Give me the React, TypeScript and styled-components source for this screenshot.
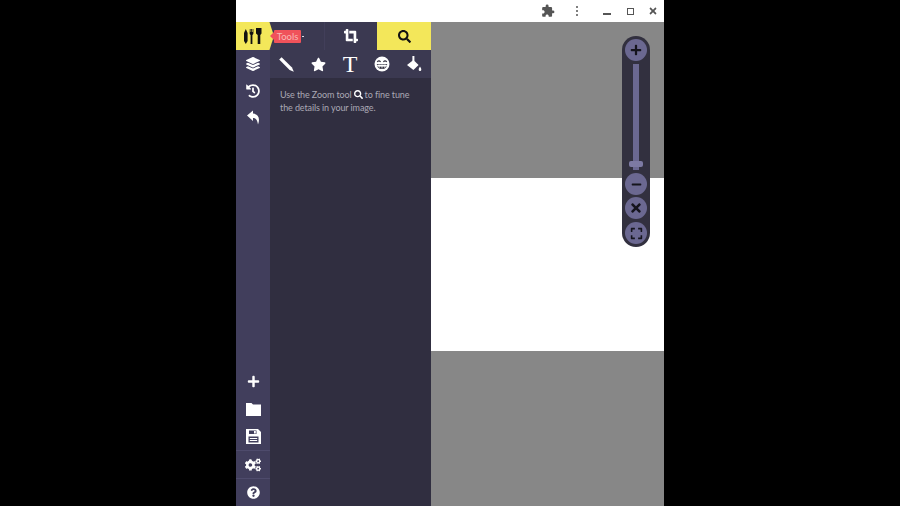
import React from "react";
import styled, { createGlobalStyle } from "styled-components";
import {
  FaCogs,
  FaCropAlt,
  FaExpand,
  FaLayerGroup,
  FaMinus,
  FaPlus,
  FaQuestionCircle,
  FaHistory,
  FaSearch,
  FaStar,
  FaTimes,
} from "react-icons/fa";
import { MdExtension } from "react-icons/md";

const GlobalStyle = createGlobalStyle`
  html, body { margin: 0; padding: 0; background: #000; }
  body { font-family: Lato, "Liberation Sans", sans-serif; }
`;

const Screen = styled.div`
  width: 900px;
  height: 506px;
  background: #000;
  display: flex;
  justify-content: center;
  overflow: hidden;
`;

const Window = styled.div`
  width: 428px;
  height: 506px;
  display: flex;
  flex-direction: column;
  background: #fff;
`;

const TitleBar = styled.div`
  height: 22px;
  flex: none;
  background: #fff;
  display: flex;
  align-items: center;
  justify-content: flex-end;
  color: #555;
`;

const TitleIcon = styled.div<{ $w: number }>`
  width: ${(p) => p.$w}px;
  display: flex;
  justify-content: center;
  align-items: center;
`;

const Dots = styled.span`
  width: 2px;
  height: 2px;
  border-radius: 50%;
  background: #555;
  box-shadow: 0 -4px 0 #555, 0 4px 0 #555;
`;

const MinBar = styled.span`
  width: 8px;
  height: 2px;
  margin-top: 6px;
  background: #555;
`;

const MaxBox = styled.span`
  width: 5px;
  height: 5px;
  border: 1.5px solid #555;
`;

const Body = styled.div`
  flex: 1;
  display: flex;
  min-height: 0;
`;

const Sidebar = styled.div`
  width: 34px;
  flex: none;
  background: #413e5c;
  display: flex;
  flex-direction: column;
`;

const LogoTab = styled.div`
  width: 38px;
  height: 28px;
  flex: none;
  background: #f3e75a;
  clip-path: polygon(0 0, 88% 0, 100% 50%, 88% 100%, 0 100%);
  display: flex;
  align-items: center;
  padding-left: 7px;
  box-sizing: border-box;
  position: relative;
  z-index: 2;
`;

const SideButton = styled.div<{ $h: number; $line?: boolean }>`
  height: ${(p) => p.$h}px;
  flex: none;
  display: flex;
  align-items: center;
  justify-content: center;
  color: #fff;
  border-top: ${(p) => (p.$line ? "1px solid #4e4b6c" : "none")};
  box-sizing: border-box;
`;

const Spacer = styled.div`
  flex: 1;
`;

const Panel = styled.div`
  width: 161px;
  flex: none;
  background: #302e40;
  display: flex;
  flex-direction: column;
  position: relative;
`;

const TopTabs = styled.div`
  height: 28px;
  flex: none;
  background: #3b3951;
  display: grid;
  grid-template-columns: 54px 53px 54px;
`;

const TopTab = styled.div<{ $active?: boolean }>`
  display: flex;
  align-items: center;
  justify-content: center;
  background: ${(p) => (p.$active ? "#f3e75a" : "transparent")};
  color: ${(p) => (p.$active ? "#111" : "#fff")};
  border-left: ${(p) => (p.$active ? "none" : "1px solid #423f5a")};
`;

const ToolRow = styled.div`
  height: 28px;
  flex: none;
  background: #3b3951;
  display: grid;
  grid-template-columns: repeat(5, 32px);
`;

const Tool = styled.div`
  display: flex;
  align-items: center;
  justify-content: center;
  color: #fff;
`;

const TextGlyph = styled.span`
  font-family: "Liberation Serif", serif;
  font-size: 24px;
  line-height: 1;
  color: #fff;
`;

const Hint = styled.div`
  padding: 10px 4px 0 10px;
  font-size: 9px;
  line-height: 13px;
  letter-spacing: -0.1px;
  color: #aaa8b4;
`;

const HintLine = styled.div`
  display: flex;
  align-items: center;
  white-space: nowrap;

  svg {
    color: #fff;
    margin: 0 2px;
  }
`;

const Tooltip = styled.div`
  position: absolute;
  left: 4px;
  top: 8px;
  width: 27px;
  height: 13px;
  background: #f0525a;
  color: #f8b9b6;
  font-size: 9.5px;
  line-height: 13px;
  text-align: center;
  border-radius: 1px;
  z-index: 3;

  &::before {
    content: "";
    position: absolute;
    left: -4px;
    top: 2px;
    border-style: solid;
    border-width: 4.5px 4px 4.5px 0;
    border-color: transparent #f0525a transparent transparent;
  }

  &::after {
    content: "";
    position: absolute;
    right: -3px;
    top: 6px;
    width: 2px;
    height: 1px;
    background: #dcdbe4;
  }
`;

const Canvas = styled.div`
  flex: 1;
  display: flex;
  flex-direction: column;
  position: relative;
`;

const Gray = styled.div<{ $h?: number }>`
  background: #878787;
  ${(p) => (p.$h ? `height: ${p.$h}px; flex: none;` : "flex: 1;")}
`;

const ImageArea = styled.div`
  height: 173px;
  flex: none;
  background: #fff;
`;

const ZoomControl = styled.div`
  position: absolute;
  left: 191px;
  top: 14px;
  width: 28px;
  height: 211px;
  background: #32303f;
  border-radius: 14px;
  box-sizing: border-box;
  padding: 3px;
  display: flex;
  flex-direction: column;
  align-items: center;
`;

const ZoomButton = styled.div<{ $mt?: number }>`
  width: 22px;
  height: 22px;
  flex: none;
  border-radius: 50%;
  background: #6b6891;
  margin-top: ${(p) => p.$mt ?? 0}px;
  color: #15141d;
  display: flex;
  align-items: center;
  justify-content: center;
`;

const Track = styled.div`
  width: 6px;
  height: 106px;
  margin-top: 3px;
  background: #6b6891;
  position: relative;
  flex: none;
`;

const Thumb = styled.div`
  position: absolute;
  left: -4px;
  bottom: 3px;
  width: 14px;
  height: 6px;
  border-radius: 2px;
  background: #7d7aa3;
`;

const ToolsLogo = () => (
  <svg width="19" height="16" viewBox="0 0 19 16" fill="#111">
    <path d="M1 5 L2.8 1 L4.6 5 V13 L2.8 16 L1 13 Z" />
    <path d="M6.8 1 h.8 v3 h.6 V1 h.8 v3 h.6 V1 h.8 v4.5 q0 1 -1 1.4 V16 h-1.8 V6.9 q-1 -.4 -1 -1.4 Z" />
    <path d="M13 0 h5.5 v5.5 l-1.2 1.5 V16 h-2.6 V7 L13 5.5 Z" />
  </svg>
);

const PencilIcon = () => (
  <svg width="15" height="15" viewBox="0 0 15 15" fill="#fff">
    <path d="M0.2 2.6 L2.6 0.2 L13 10.6 L14.8 14.8 L10.6 13 Z" />
  </svg>
);

const GrinIcon = () => (
  <svg width="16" height="16" viewBox="0 0 16 16">
    <circle cx="8" cy="8" r="7.5" fill="#fff" />
    <path d="M3.2 6 Q5 3.8 6.6 6 M9.4 6 Q11 3.8 12.8 6" fill="none" stroke="#32303f" strokeWidth="1.1" />
    <path d="M2.8 8 H13.2 Q13 13 8 13 Q3 13 2.8 8 Z" fill="#32303f" />
    <path d="M3.6 9 H12.4 V10.2 H3.6 Z M5.2 8.6 V12 M8 8.6 V12.6 M10.8 8.6 V12" fill="#fff" stroke="#fff" strokeWidth="0.7" />
  </svg>
);

const BucketIcon = () => (
  <svg width="16" height="16" viewBox="0 0 16 16" fill="#fff">
    <path d="M6.4 0 h2 v5 h-2 z" />
    <path d="M7.4 4 L12.6 9 L7.4 14 L1 9 Z" />
    <path d="M14 10.5 Q15.6 12.8 15.3 13.8 a1.3 1.3 0 0 1 -2.6 0 Q12.4 12.8 14 10.5 Z" />
  </svg>
);

const UndoIcon = () => (
  <svg width="14" height="15" viewBox="0 0 14 15" fill="#fff">
    <path d="M1 5.5 L7 0.5 V3.6 C12 3.6 14.5 8 12 14.5 C11.4 10.5 10 8 7 8 V11 Z" />
  </svg>
);

const FolderIcon = () => (
  <svg width="15" height="14" viewBox="0 0 15 14" fill="#fff">
    <path d="M0 1 h5.5 l1.5 1.5 H15 V14 H0 Z" />
  </svg>
);

const SaveIcon = () => (
  <svg width="15" height="15" viewBox="0 0 15 15">
    <path d="M0 0 H12 L15 3 V15 H0 Z" fill="#fff" />
    <path d="M3 1.5 H10.5 V5 H3 Z M2.5 7.5 H12.5 V13.5 H2.5 Z" fill="#413e5c" />
    <path d="M8 2 H9.8 V4.5 H8 Z M3.8 9 H11.2 V10 H3.8 Z M3.8 11 H11.2 V12 H3.8 Z" fill="#fff" />
  </svg>
);

export default function App() {
  return (
    <Screen>
      <GlobalStyle />
      <Window>
        <TitleBar>
          <TitleIcon $w={18}>
            <MdExtension size={14} />
          </TitleIcon>
          <TitleIcon $w={39}>
            <Dots />
          </TitleIcon>
          <TitleIcon $w={22}>
            <MinBar />
          </TitleIcon>
          <TitleIcon $w={24}>
            <MaxBox />
          </TitleIcon>
          <TitleIcon $w={22}>
            <FaTimes size={10} />
          </TitleIcon>
        </TitleBar>
        <Body>
          <Sidebar>
            <LogoTab>
              <ToolsLogo />
            </LogoTab>
            <SideButton $h={27}>
              <FaLayerGroup size={14} />
            </SideButton>
            <SideButton $h={27}>
              <FaHistory size={14} />
            </SideButton>
            <SideButton $h={27}>
              <UndoIcon />
            </SideButton>
            <Spacer />
            <SideButton $h={28}>
              <FaPlus size={13} />
            </SideButton>
            <SideButton $h={27}>
              <FolderIcon />
            </SideButton>
            <SideButton $h={28}>
              <SaveIcon />
            </SideButton>
            <SideButton $h={28} $line>
              <FaCogs size={16} />
            </SideButton>
            <SideButton $h={28} $line>
              <FaQuestionCircle size={13} />
            </SideButton>
          </Sidebar>
          <Panel>
            <Tooltip>Tools</Tooltip>
            <TopTabs>
              <TopTab />
              <TopTab>
                <FaCropAlt size={14} />
              </TopTab>
              <TopTab $active>
                <FaSearch size={13} />
              </TopTab>
            </TopTabs>
            <ToolRow>
              <Tool>
                <PencilIcon />
              </Tool>
              <Tool>
                <FaStar size={15} />
              </Tool>
              <Tool>
                <TextGlyph>T</TextGlyph>
              </Tool>
              <Tool>
                <GrinIcon />
              </Tool>
              <Tool>
                <BucketIcon />
              </Tool>
            </ToolRow>
            <Hint>
              <HintLine>
                Use the Zoom tool
                <FaSearch size={9} />
                to fine tune
              </HintLine>
              <HintLine>the details in your image.</HintLine>
            </Hint>
          </Panel>
          <Canvas>
            <Gray $h={156} />
            <ImageArea />
            <Gray />
            <ZoomControl>
              <ZoomButton>
                <FaPlus size={12} />
              </ZoomButton>
              <Track>
                <Thumb />
              </Track>
              <ZoomButton $mt={3}>
                <FaMinus size={11} />
              </ZoomButton>
              <ZoomButton $mt={2}>
                <FaTimes size={14} />
              </ZoomButton>
              <ZoomButton $mt={3}>
                <FaExpand size={13} />
              </ZoomButton>
            </ZoomControl>
          </Canvas>
        </Body>
      </Window>
    </Screen>
  );
}
